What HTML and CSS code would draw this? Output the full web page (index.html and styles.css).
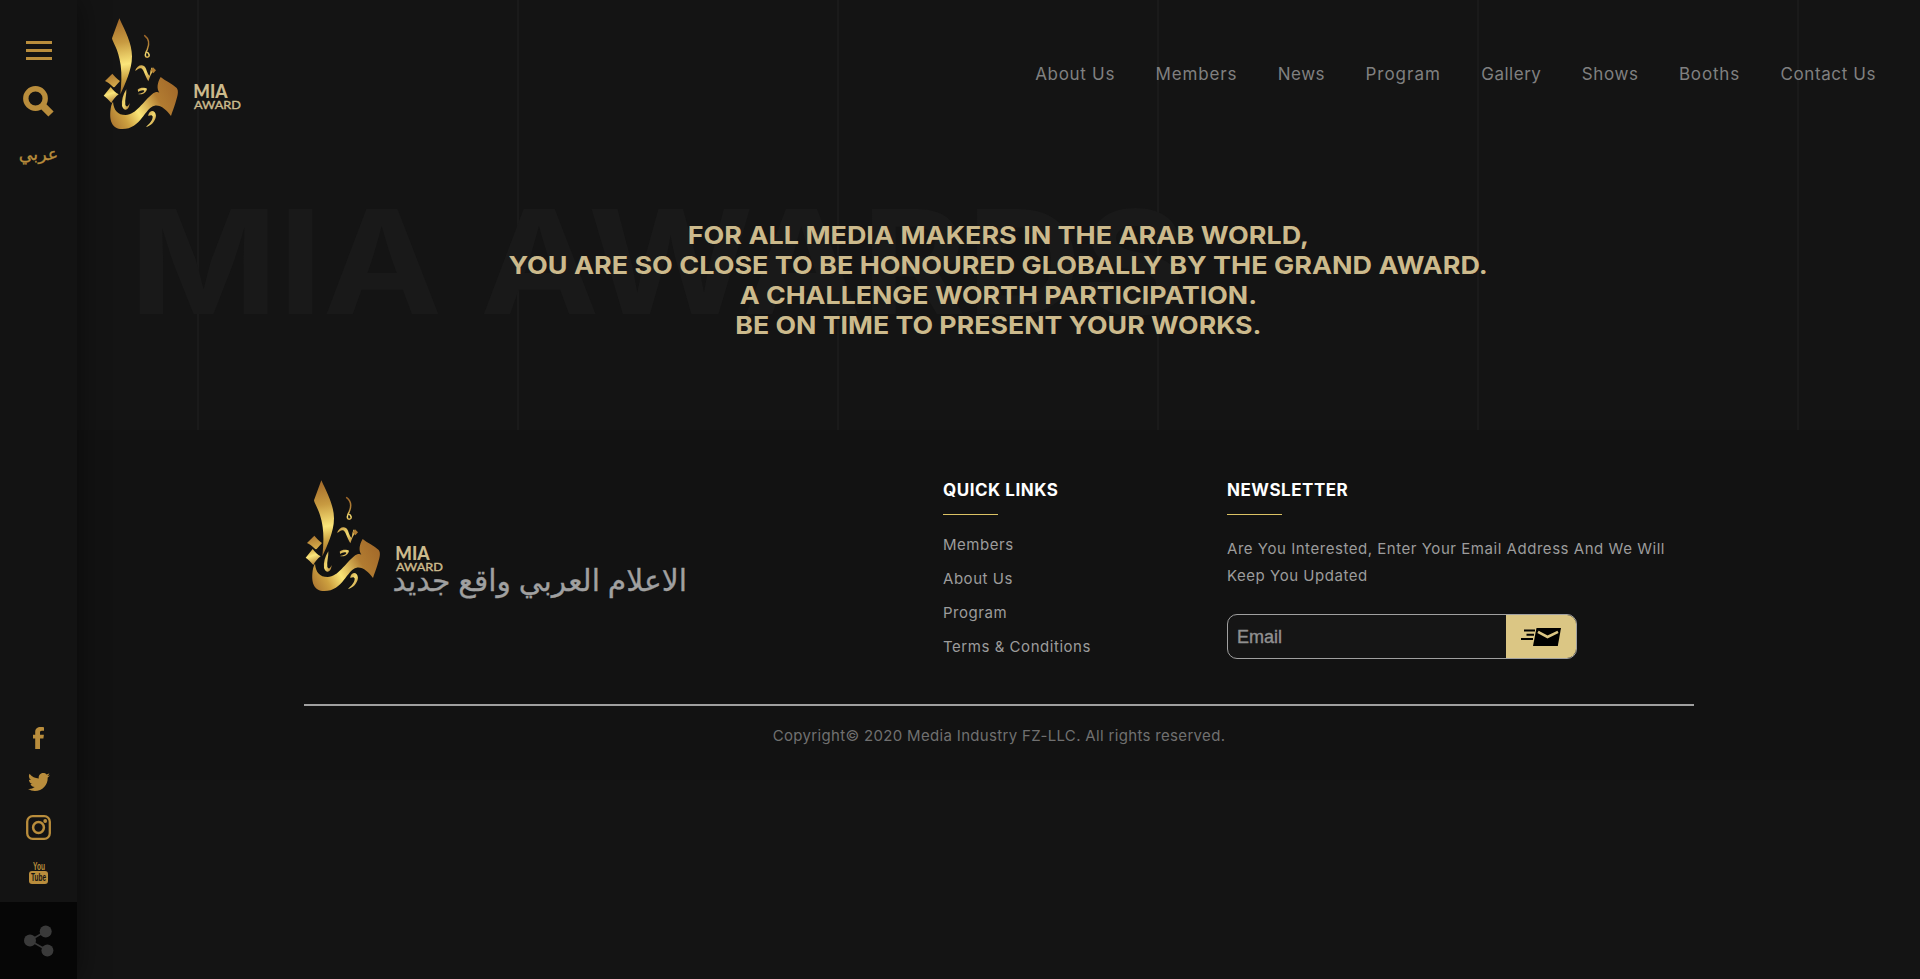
FILE: index.html
```html
<!DOCTYPE html>
<html lang="en">
<head>
<meta charset="utf-8">
<title>MIA Award</title>
<link rel="stylesheet" href="styles.css">
</head>
<body>
<svg class="defs" width="0" height="0" aria-hidden="true">
  <defs>
    <linearGradient id="blade" gradientUnits="userSpaceOnUse" x1="60" y1="35" x2="98" y2="250">
      <stop offset="0" stop-color="#a56d2b"/><stop offset=".3" stop-color="#c89b41"/><stop offset=".6" stop-color="#fbe67a"/><stop offset=".8" stop-color="#c99f3f"/><stop offset="1" stop-color="#a06a2a"/>
    </linearGradient>
    <linearGradient id="bowl" gradientUnits="userSpaceOnUse" x1="228" y1="225" x2="40" y2="335">
      <stop offset="0" stop-color="#a66d2b"/><stop offset=".25" stop-color="#b27c31"/><stop offset=".58" stop-color="#fae577"/><stop offset=".78" stop-color="#cda03f"/><stop offset="1" stop-color="#a97430"/>
    </linearGradient>
    <linearGradient id="dot" x1="0.4" y1="0" x2="0.7" y2="1">
      <stop offset="0" stop-color="#ad7830"/><stop offset="1" stop-color="#d9b04d"/>
    </linearGradient>
    <linearGradient id="shine" x1="0.4" y1="0" x2="0.7" y2="1">
      <stop offset="0" stop-color="#d3a845"/><stop offset=".4" stop-color="#fbe77c"/><stop offset="1" stop-color="#b07a30"/>
    </linearGradient>
    <linearGradient id="mark" x1="0" y1="0" x2="1" y2="1">
      <stop offset="0" stop-color="#c39440"/><stop offset=".5" stop-color="#f2da70"/><stop offset="1" stop-color="#ac762f"/>
    </linearGradient>
    <linearGradient id="curl" gradientUnits="userSpaceOnUse" x1="150" y1="76" x2="156" y2="144">
      <stop offset="0" stop-color="#9b6428"/><stop offset=".55" stop-color="#b98a3a"/><stop offset=".85" stop-color="#f6df74"/><stop offset="1" stop-color="#c99c40"/>
    </linearGradient>
    <symbol id="logo" viewBox="0 0 480 375">
      <path fill="url(#blade)" d="M73 25 L51 85 C52 96 70 115 77 165 C81 195 79 225 76 253 C90 222 111 180 111 139 C111 100 90 62 73 25Z"/>
      <path fill="url(#dot)" d="M52 191 C59 199 67 207 75 213 L61 229 Q57 235 52 229 C46 222 38 217 30 213Z"/>
      <path fill="url(#shine)" d="M47 231 C54 241 62 248 71 253 C62 260 54 269 49 279 C42 270 34 262 26 257Z"/>
      <path fill="url(#bowl)" d="M54 275 C56 300 68 315 92 315 C124 314 145 273 172 252 C180 246 188 245 193 248 C185 236 186 220 197 201 C210 212 232 222 245 234 C252 243 248 257 241 280 C237 294 232 305 228 318 C215 300 197 284 179 287 C150 292 138 357 82 357 C50 357 44 330 46 305 C47 292 49 282 54 275Z"/>
      <path fill="url(#mark)" d="M94 238 C84 253 79 272 81 288 C86 304 102 304 104 279 C99 291 94 292 91 284 C89 268 95 254 94 238Z"/>
      <path fill="none" stroke="url(#curl)" stroke-width="4.500" stroke-linecap="round" d="M149 77 C165 89 162 106 157 118 C149 132 149 142 157 142 C166 141 163 128 155 127"/>
      <path fill="url(#mark)" d="M120 182 C127 165 145 159 153 176 C157 188 160 195 164 197 C166 186 167 176 171 172 L174 184 C168 192 164 202 160 214 C149 196 146 177 138 175 C131 173 127 181 120 182Z"/>
      <path fill="#b17d32" d="M174 172 L183 181 L175 190 L167 181Z"/>
      <path fill="url(#mark)" d="M128 239 C136 231 149 232 156 236 C154 248 143 255 129 252 C140 250 147 247 148 242 C142 239 135 242 130 246Z"/>
      <path fill="url(#mark)" d="M160 314 C165 297 182 300 183 317 C181 335 168 347 153 351 C165 340 174 330 173 319 C170 313 165 316 160 318Z"/>
      <g class="logo-text">
        <text x="295" y="264" font-size="57" font-weight="900" textLength="103" lengthAdjust="spacingAndGlyphs">MIA</text>
        <text x="297" y="297" font-size="36" font-weight="400" stroke="#ccba8c" stroke-width="1.200" textLength="141" lengthAdjust="spacingAndGlyphs">AWARD</text>
      </g>
    </symbol>
  </defs>
</svg>

<aside class="sidebar">
  <div class="tools">
    <div class="burger"><i></i><i></i><i></i></div>
    <svg class="search" width="31" height="31" viewBox="0 0 31 31"><circle cx="12.500" cy="12.500" r="9.700"/><path d="M19.500 19.500l8.500 8.500"/></svg>
    <a class="lang" lang="ar" dir="rtl">عربي</a>
  </div>
  <div class="social">
    <svg width="11" height="22" viewBox="0 0 11 22"><path d="M11 .2v3.600H8.900c-1.500 0-1.900.7-1.900 1.800v2.100h3.900l-.5 3.900H7V22H2.200V11.600H0V7.700h2.200V5C2.200 1.800 4.400 0 7.600 0 9 0 10.400.1 11 .2z"/></svg>
    <svg width="22" height="18" viewBox="0 0 22 18"><path d="M22 2.200a9 9 0 0 1-2.300 2.300C20 12 14.500 18 6.900 18A12.600 12.600 0 0 1 0 16c2.500.3 4.800-.4 6.700-1.900-2-.1-3.600-1.300-4.200-3.100.7.1 1.400.1 2-.1C2.300 10.400.9 8.600.9 6.400c.6.3 1.300.5 2 .6C.9 5.600.3 2.900 1.500.8a12.800 12.800 0 0 0 9.300 4.700C10.100 2.600 12.300 0 15.200 0c1.300 0 2.500.5 3.300 1.400 1-.2 2-.6 2.900-1.100-.3 1-1 1.900-2 2.500.9-.1 1.800-.3 2.600-.6z"/></svg>
    <svg width="25" height="25" viewBox="0 0 25 25"><rect x="1.200" y="1.200" width="22.600" height="22.600" rx="5.500" fill="none" stroke="#b98d3c" stroke-width="2.300"/><circle cx="12.500" cy="12.500" r="5.400" fill="none" stroke="#b98d3c" stroke-width="2.500"/><circle cx="19.200" cy="6" r="1.900"/></svg>
    <svg width="19" height="23" viewBox="0 0 19 23"><rect y="10" width="19" height="13" rx="3"/><text x="4" y="8.600" font-size="11" textLength="12" lengthAdjust="spacingAndGlyphs">You</text><text class="tube" x="2" y="20.300" font-size="11" textLength="15" lengthAdjust="spacingAndGlyphs">Tube</text></svg>
  </div>
  <div class="share">
    <svg width="30" height="32" viewBox="0 0 30 32"><path d="M6 15.500L22 6M6 15.500l17.500 10" stroke="#3a3a3a" stroke-width="1.500"/><circle cx="21.700" cy="6.500" r="6"/><circle cx="6" cy="15.500" r="6"/><circle cx="23.400" cy="25.500" r="6"/></svg>
  </div>
</aside>

<main class="page">
  <section class="hero">
    <header class="topbar">
      <svg class="logo" width="160" height="125"><use href="#logo"/></svg>
      <nav class="nav">
        <a>About Us</a><a>Members</a><a>News</a><a>Program</a><a>Gallery</a><a>Shows</a><a>Booths</a><a>Contact Us</a>
      </nav>
    </header>
    <div class="banner">
      <div class="watermark" aria-hidden="true">MIA AWARDS</div>
      <h1 class="headline">
        <span>FOR ALL MEDIA MAKERS IN THE ARAB WORLD,</span>
        <span>YOU ARE SO CLOSE TO BE HONOURED GLOBALLY BY THE GRAND AWARD.</span>
        <span class="snug">A CHALLENGE WORTH PARTICIPATION.</span>
        <span class="snug">BE ON TIME TO PRESENT YOUR WORKS.</span>
      </h1>
    </div>
  </section>

  <footer class="footer">
    <div class="columns">
      <div class="brand">
        <svg class="logo" width="160" height="125"><use href="#logo"/></svg>
        <p class="slogan" lang="ar" dir="rtl">الاعلام العربي واقع جديد</p>
      </div>
      <div class="links">
        <h2>QUICK LINKS</h2>
        <a>Members</a><a>About Us</a><a>Program</a><a>Terms &amp; Conditions</a>
      </div>
      <div class="newsletter">
        <h2>NEWSLETTER</h2>
        <p>Are You Interested, Enter Your Email Address And We Will<br>Keep You Updated</p>
        <form class="subscribe">
          <input type="text" placeholder="Email" aria-label="Email">
          <button type="button" aria-label="Subscribe">
            <svg width="40" height="18" viewBox="0 0 40 18"><path d="M15.500 0H40l-3.200 18H12z"/><path d="M17 3.800l9.500 5.200 10.500-5.200" fill="none" stroke="#dbc684" stroke-width="2.600"/><path d="M3 2.500h11M5.500 6.800H13M0 11h12" stroke="#000" stroke-width="1.900"/></svg>
          </button>
        </form>
      </div>
    </div>
    <p class="copyright">Copyright© 2020 Media Industry FZ-LLC. All rights reserved.</p>
  </footer>
</main>
</body>
</html>
```
FILE: styles.css
```css
* { box-sizing: border-box; }
body {
  margin: 0;
  display: flex;
  height: 979px;
  overflow: hidden;
  background: #141414;
  font-family: Inter, "Open Sans", sans-serif;
}
h1, h2, p { margin: 0; }
svg { display: block; }
.defs { position: absolute; }
.logo-text { fill: #ccba8c; font-family: Lato, sans-serif; }

/* Sidebar */
.sidebar {
  position: relative;
  z-index: 2;
  flex: none;
  width: 77px;
  display: flex;
  flex-direction: column;
  align-items: center;
  background: #131313;
  box-shadow: 0 0 30px rgba(0, 0, 0, .5);
}
.tools {
  flex: 1;
  display: flex;
  flex-direction: column;
  align-items: center;
  padding-top: 41px;
}
.burger { display: grid; gap: 5px; }
.burger i { width: 26px; height: 3px; background: #b98d3c; }
.search { margin-top: 26px; fill: none; stroke: #b98d3c; stroke-width: 5.4; }
.search path { stroke-width: 7.4; }
.lang {
  margin-top: 22px;
  font: 17.5px/28px "Noto Sans", "DejaVu Sans", sans-serif;
  color: #b98d3c;
  -webkit-text-stroke: .3px #b98d3c;
}
.social {
  display: flex;
  flex-direction: column;
  align-items: center;
  gap: 24px;
  padding-bottom: 18px;
  fill: #b98d3c;
}
.social svg { overflow: visible; }
.social svg:last-child { margin-top: -3px; }
.social text { font-family: "Liberation Sans", sans-serif; font-weight: bold; }
.social .tube { fill: #131313; }
.share {
  width: 77px;
  height: 77px;
  display: grid;
  place-items: center;
  background: #060606;
  fill: #3a3a3a;
}

/* Hero */
.page { flex: 1; min-width: 0; }
.hero {
  height: 430px;
  background: repeating-linear-gradient(90deg, #1a1a1a 0 2px, transparent 2px 320px) 120px 0 no-repeat;
}
.topbar {
  display: flex;
  justify-content: space-between;
  height: 181px;
  padding: 10px 44px 0 18px;
}
.nav { display: flex; gap: 40.4px; padding-top: 50px; }
.nav a {
  font-size: 17px;
  line-height: 28px;
  letter-spacing: .7px;
  color: #808080;
  white-space: nowrap;
}
.nav a:nth-child(2) { letter-spacing: .85px; }
.nav a:nth-child(3) { letter-spacing: .5px; }
.nav a:nth-child(4) { letter-spacing: 1px; }
.nav a:nth-child(5) { letter-spacing: .5px; }
.nav a:nth-child(6) { letter-spacing: .6px; }
.nav a:nth-child(7) { letter-spacing: .85px; }
.nav a:nth-child(8) { letter-spacing: .6px; }
.banner { position: relative; }
.watermark {
  position: absolute;
  left: 52px;
  top: -6px;
  font-size: 144px;
  font-weight: 700;
  line-height: 174px;
  white-space: nowrap;
  color: #191919;
  transform: scaleX(1.11);
  transform-origin: 0 0;
}
.headline {
  position: relative;
  display: flex;
  flex-direction: column;
  align-items: center;
  padding-top: 39px;
  font-size: 24.5px;
  font-weight: 700;
  line-height: 30px;
  color: #ccba8c;
}
.headline span { transform: scaleX(1.1); white-space: nowrap; }
.headline .snug { transform: scaleX(1.09); }

/* Footer */
.footer { height: 350px; padding: 42px 226px 0 227px; background: #121212; }
.columns {
  display: grid;
  grid-template-columns: 639px 284px 1fr;
  height: 234px;
  border-bottom: 2px solid #a0a0a0;
}
.brand .logo { margin-left: -7px; }
.slogan {
  width: 383px;
  margin-top: -39px;
  font: 29.8px/44px "Noto Sans", "DejaVu Sans", sans-serif;
  color: #a0a0a0;
  -webkit-text-stroke: .3px #a0a0a0;
  white-space: nowrap;
}
.columns h2 {
  padding-top: 7px;
  font-size: 17px;
  font-weight: 700;
  line-height: 22px;
  letter-spacing: .52px;
  color: #fff;
}
.columns h2::after {
  content: "";
  display: block;
  width: 55px;
  height: 1px;
  margin-top: 13px;
  background: #dbc264;
}
.links a, .newsletter p { font-size: 15px; letter-spacing: .54px; color: #9c9c9c; }
.links a { display: block; line-height: 34px; }
.links h2 { margin-bottom: 13px; }
.newsletter p { margin-top: 20px; line-height: 27px; white-space: nowrap; }
.subscribe {
  display: flex;
  width: 350px;
  height: 45px;
  margin-top: 25px;
  overflow: hidden;
  border: 1px solid #a0a0a0;
  border-radius: 10px;
  background: #151515;
}
.subscribe input {
  flex: 1;
  min-width: 0;
  padding: 2px 9px 0;
  border: 0;
  background: none;
  font: 18px "Liberation Sans", sans-serif;
}
.subscribe input::placeholder { color: #909090; -webkit-text-stroke: .4px #909090; }
.subscribe button {
  width: 70px;
  padding: 0 0 0 15px;
  border: 0;
  background: #dbc684;
}
.copyright {
  padding-top: 16px;
  font-size: 15px;
  line-height: 27px;
  letter-spacing: .33px;
  text-align: center;
  color: #707070;
}
```
